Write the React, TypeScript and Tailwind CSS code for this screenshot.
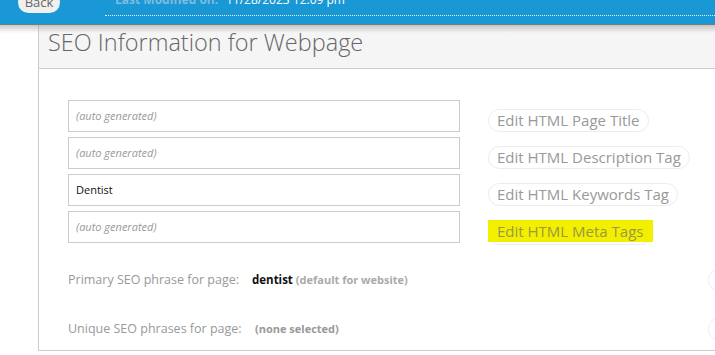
import React from "react";

const font = { fontFamily: '"Open Sans", "Liberation Sans", sans-serif' };

function Field({ value, placeholder }: { value?: string; placeholder?: string }) {
  return (
    <div className="w-[392px] h-[32px] border border-[#cccccc] bg-white flex items-center px-[7px]">
      {value ? (
        <span className="text-[11px] text-[#111]">{value}</span>
      ) : (
        <span className="text-[11px] italic text-[#999]">{placeholder}</span>
      )}
    </div>
  );
}

function EditBtn({ label, highlight }: { label: string; highlight?: boolean }) {
  if (highlight) {
    return (
      <span className="relative inline-flex items-center h-[23px] px-[8px] rounded-full border border-[#ececec] text-[15px] leading-none text-[#9a9a40]">
        <span className="absolute -left-[1px] -top-[3px] right-[-2px] h-[22px] bg-[#f2ef00]" />
        <span className="relative -mt-[4px]">{label}</span>
      </span>
    );
  }
  return (
    <span className="inline-flex items-center h-[23px] px-[8px] rounded-full border border-[#ececec] text-[15px] leading-none text-[#999999]">
      {label}
    </span>
  );
}

export default function App() {
  const rows = [
    { placeholder: "(auto generated)", label: "Edit HTML Page Title" },
    { placeholder: "(auto generated)", label: "Edit HTML Description Tag" },
    { value: "Dentist", label: "Edit HTML Keywords Tag" },
    { placeholder: "(auto generated)", label: "Edit HTML Meta Tags", highlight: true },
  ];
  return (
    <div className="w-[715px] h-[355px] overflow-hidden bg-white relative" style={font}>
      {/* top bar */}
      <div className="relative z-10 h-[25px] bg-[#1a98d5] border-b border-[#2d5b70]">
        <div className="flex items-start">
          <div className="ml-[18px] -mt-[8px] h-[21px] w-[42px] rounded-full bg-[#f0f0f0] flex items-center justify-center text-[13px] text-[#666]">
            Back
          </div>
          <div className="ml-[45px] flex-1 -mt-[7px]">
            <div className="flex items-center h-[14px] pl-[10px]">
              <span className="text-[12px] font-bold text-[#7cbde0] w-[111px]">Last Modified on:</span>
              <span className="text-[12px] text-white">11/28/2023 12:09 pm</span>
            </div>
            <div className="mt-[8px] border-t border-dotted border-[#e8f4fb]" />
          </div>
        </div>
        <div className="absolute left-0 right-0 top-full h-[9px] bg-gradient-to-b from-[#9a9a9a] to-transparent opacity-60" />
      </div>

      {/* panel */}
      <div className="ml-[38px] border-l border-b border-[#cccccc] h-[326px]">
        <div className="h-[44px] bg-[#f5f5f5] border-b border-[#cccccc] flex items-center pl-[9px] pb-[8px]">
          <span className="text-[23.5px] font-light text-[#666]">SEO Information for Webpage</span>
        </div>
        <div className="pl-[29px] pt-[31px]">
          <div className="flex flex-col gap-[5px]">
            {rows.map((r, i) => (
              <div key={i} className="flex items-start gap-[28px] h-[32px]">
                <Field value={r.value} placeholder={r.placeholder} />
                <div className="mt-[8px]">
                  <EditBtn label={r.label} highlight={r.highlight} />
                </div>
              </div>
            ))}
          </div>
          <div className="mt-[25px] flex items-center h-[24px]">
            <span className="text-[12.5px] text-[#999] w-[184px]">Primary SEO phrase for page:</span>
            <span className="text-[11.5px] font-bold text-[#111]">dentist</span>
            <span className="ml-[3px] text-[11px] font-bold text-[#aaa]">(default for website)</span>
            <span className="ml-auto -mr-[17px] w-[24px] h-[24px] rounded-full border border-[#eeeeee]" />
          </div>
          <div className="mt-[25px] flex items-center h-[24px]">
            <span className="text-[12.5px] text-[#999] w-[187px]">Unique SEO phrases for page:</span>
            <span className="text-[11px] font-bold text-[#999]">(none selected)</span>
            <span className="ml-auto -mr-[17px] w-[24px] h-[24px] rounded-full border border-[#eeeeee]" />
          </div>
        </div>
      </div>
    </div>
  );
}
